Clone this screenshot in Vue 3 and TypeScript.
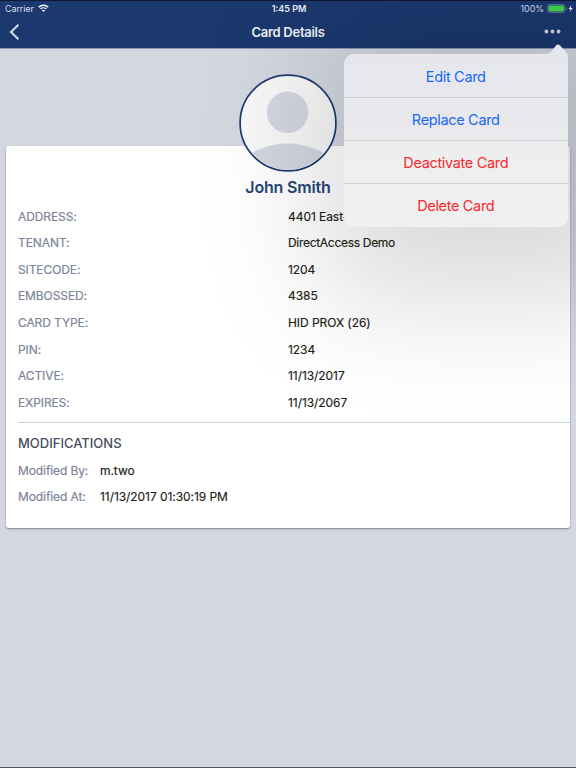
<script setup lang="ts">
interface Field { label: string; value: string }
interface Action { label: string; danger: boolean }

const fields: Field[] = [
  { label: 'ADDRESS:', value: '4401 East-' },
  { label: 'TENANT:', value: 'DirectAccess Demo' },
  { label: 'SITECODE:', value: '1204' },
  { label: 'EMBOSSED:', value: '4385' },
  { label: 'CARD TYPE:', value: 'HID PROX (26)' },
  { label: 'PIN:', value: '1234' },
  { label: 'ACTIVE:', value: '11/13/2017' },
  { label: 'EXPIRES:', value: '11/13/2067' },
]

const modifications: Field[] = [
  { label: 'Modified By:', value: 'm.two' },
  { label: 'Modified At:', value: '11/13/2017 01:30:19 PM' },
]

const actions: Action[] = [
  { label: 'Edit Card', danger: false },
  { label: 'Replace Card', danger: false },
  { label: 'Deactivate Card', danger: true },
  { label: 'Delete Card', danger: true },
]

const isWords = (text: string) => /[A-Z][a-z]+.*[A-Z][a-z]+/.test(text)
</script>

<template>
  <div class="screen">
    <header class="header">
      <div class="status">
        <div class="carrier">
          <span>Carrier</span>
          <svg class="wifi" width="11" height="9" viewBox="0 0 11 9">
            <path d="M0.8 3.1a6.8 6.8 0 0 1 9.4 0" fill="none" stroke="#f3f5fa" stroke-width="1.5" />
            <path d="M2.6 5a4.2 4.2 0 0 1 5.8 0" fill="none" stroke="#f3f5fa" stroke-width="1.4" />
            <path d="M3.9 6.4a2.4 2.4 0 0 1 3.2 0L5.5 8.1z" fill="#f3f5fa" />
          </svg>
        </div>
        <span class="clock">1:45 PM</span>
        <div class="power">
          <span>100%</span>
          <svg width="26" height="9" viewBox="0 0 26 9">
            <rect x="0.5" y="0.5" width="17.4" height="8" rx="1.8" fill="none" stroke="#6f82a6" stroke-width="0.8" />
            <rect x="1.5" y="1.5" width="15.4" height="6" rx="0.8" fill="#42d54f" />
            <path d="M18.7 3v3q1.2-.4 1.2-1.5T18.7 3z" fill="#6f82a6" />
            <path d="M24.4 1.1L21.6 5h1.8l-.8 3L25.7 4h-1.9z" fill="#f3f5fa" />
          </svg>
        </div>
      </div>
      <div class="nav">
        <svg class="back" width="12" height="18" viewBox="0 0 12 18">
          <path d="M10.4 1.7L3 9l7.4 7.3" fill="none" stroke="#dce2ec" stroke-width="1.9" />
        </svg>
        <h1>Card Details</h1>
        <svg class="more" width="17" height="5" viewBox="0 0 17 5">
          <circle cx="2.4" cy="2.5" r="1.9" />
          <circle cx="8.5" cy="2.5" r="1.9" />
          <circle cx="14.6" cy="2.5" r="1.9" />
        </svg>
      </div>
    </header>

    <main class="content">
      <section class="card">
        <svg class="avatar" width="98" height="98" viewBox="0 0 98 98">
          <defs>
            <clipPath id="face"><circle cx="49" cy="49" r="46.8" /></clipPath>
          </defs>
          <circle cx="49" cy="49" r="47.9" fill="#f8f8f8" stroke="#203b72" stroke-width="1.7" />
          <circle cx="48.6" cy="38.3" r="20.7" fill="#d3d7e0" />
          <circle cx="48.6" cy="142" r="72.5" fill="#d3d7e0" clip-path="url(#face)" />
        </svg>
        <h2>John Smith</h2>
        <dl class="fields">
          <div v-for="f in fields" :key="f.label" class="row">
            <dt>{{ f.label }}</dt>
            <dd :class="{ words: isWords(f.value) }">{{ f.value }}</dd>
          </div>
        </dl>
        <div class="mods">
          <h3>MODIFICATIONS</h3>
          <dl>
            <div v-for="m in modifications" :key="m.label" class="row">
              <dt>{{ m.label }}</dt>
              <dd>{{ m.value }}</dd>
            </div>
          </dl>
        </div>
      </section>
    </main>

    <div class="popover">
      <svg class="arrow" width="23" height="13" viewBox="0 0 23 13">
        <path d="M0 10C4 9.8 5.6 8.4 7.4 6.2L11 1.6C12.4 .1 13.6 .1 15 1.6L20.5 7.4C21.8 8.8 22.5 10.4 22.5 13V10z" fill="#e4e7ec" />
      </svg>
      <button v-for="a in actions" :key="a.label" :class="{ danger: a.danger }">{{ a.label }}</button>
    </div>
  </div>
</template>

<style>
body {
  margin: 0;
}
</style>

<style scoped>
.screen {
  position: relative;
  box-sizing: border-box;
  width: 576px;
  height: 768px;
  overflow: hidden;
  background: #d3d7e0;
  border-bottom: 1px solid #4c5466;
  font-family: Inter, "Liberation Sans", sans-serif;
}
h1, h2, h3, dl, dt, dd {
  margin: 0;
}
.header {
  box-sizing: border-box;
  height: 49px;
  background: #1b386f;
  border-top: 1px solid #0e1830;
  border-bottom: 1px solid #8c9ab6;
  color: #eef1f6;
}
.status {
  display: grid;
  grid-template-columns: 1fr auto 1fr;
  align-items: center;
  height: 15px;
  padding: 0 3px 0 5px;
  font-size: 9px;
}
.carrier, .power {
  display: flex;
  align-items: center;
  color: #d9dfeb;
}
.carrier {
  gap: 4px;
  letter-spacing: -0.1px;
}
.power {
  justify-content: flex-end;
  gap: 3px;
  letter-spacing: -0.1px;
}
.clock {
  font-weight: 600;
  font-size: 9px;
}
.nav {
  display: grid;
  grid-template-columns: 1fr auto 1fr;
  align-items: center;
  height: 31px;
  padding: 0 15px 0 8px;
}
h1 {
  padding-left: 7px;
  font-size: 13px;
  font-weight: 600;
  line-height: 20px;
  letter-spacing: -0.27px;
}
.more {
  justify-self: end;
  fill: #d0d6e2;
}
.content {
  padding: 97px 6px 0;
}
.card {
  box-sizing: border-box;
  display: flex;
  flex-direction: column;
  width: 564px;
  height: 382px;
  padding-left: 12px;
  background: #fff;
  border-radius: 3px;
  box-shadow: 0 1px 2px rgba(40, 50, 70, 0.5);
}
.avatar {
  flex: none;
  align-self: center;
  margin: -72.5px 12px 0 0;
}
h2 {
  margin: 3.5px 12px 3px 0;
  color: #254777;
  font-size: 16px;
  font-weight: 600;
  line-height: 24px;
  letter-spacing: -0.18px;
  text-align: center;
}
.row {
  display: flex;
  height: 26.6px;
  align-items: center;
  font-size: 12px;
  white-space: nowrap;
}
.fields {
  padding-top: 0.9px;
}
.fields dt {
  width: 270px;
}
dt {
  color: #7d8598;
  letter-spacing: -0.1px;
  -webkit-text-stroke: 0.2px currentColor;
}
dd {
  color: #202114;
  letter-spacing: -0.06px;
  -webkit-text-stroke: 0.15px currentColor;
}
.words {
  letter-spacing: -0.3px;
}
.mods {
  margin-top: 6.1px;
  border-top: 1px solid #cbd0da;
  padding-top: 7.3px;
}
.mods dt {
  width: 82px;
}
h3 {
  color: #474e60;
  font-size: 13px;
  font-weight: 500;
  line-height: 27px;
}
.popover {
  position: absolute;
  left: 343.5px;
  top: 54px;
  width: 224.5px;
  height: 172.5px;
  display: flex;
  flex-direction: column;
  background: linear-gradient(#e5e7ec 0, #e8e8ed 40%, #eeeeef 58%, #f0f0f0 100%);
  border-radius: 10px 0 10px 10px;
  box-shadow: 30px 18px 125px 55px rgba(0, 0, 0, 0.15);
}
.arrow {
  position: absolute;
  right: 0;
  top: -10px;
}
.popover button {
  flex: 1;
  padding: 1px 0 0;
  border: 0;
  background: none;
  color: #1769f5;
  font-family: inherit;
  font-size: 14.5px;
  letter-spacing: -0.33px;
}
.popover button + button {
  padding-top: 0;
  border-top: 1px solid #cfd0d6;
}
.popover .danger {
  color: #f7292e;
}
</style>
